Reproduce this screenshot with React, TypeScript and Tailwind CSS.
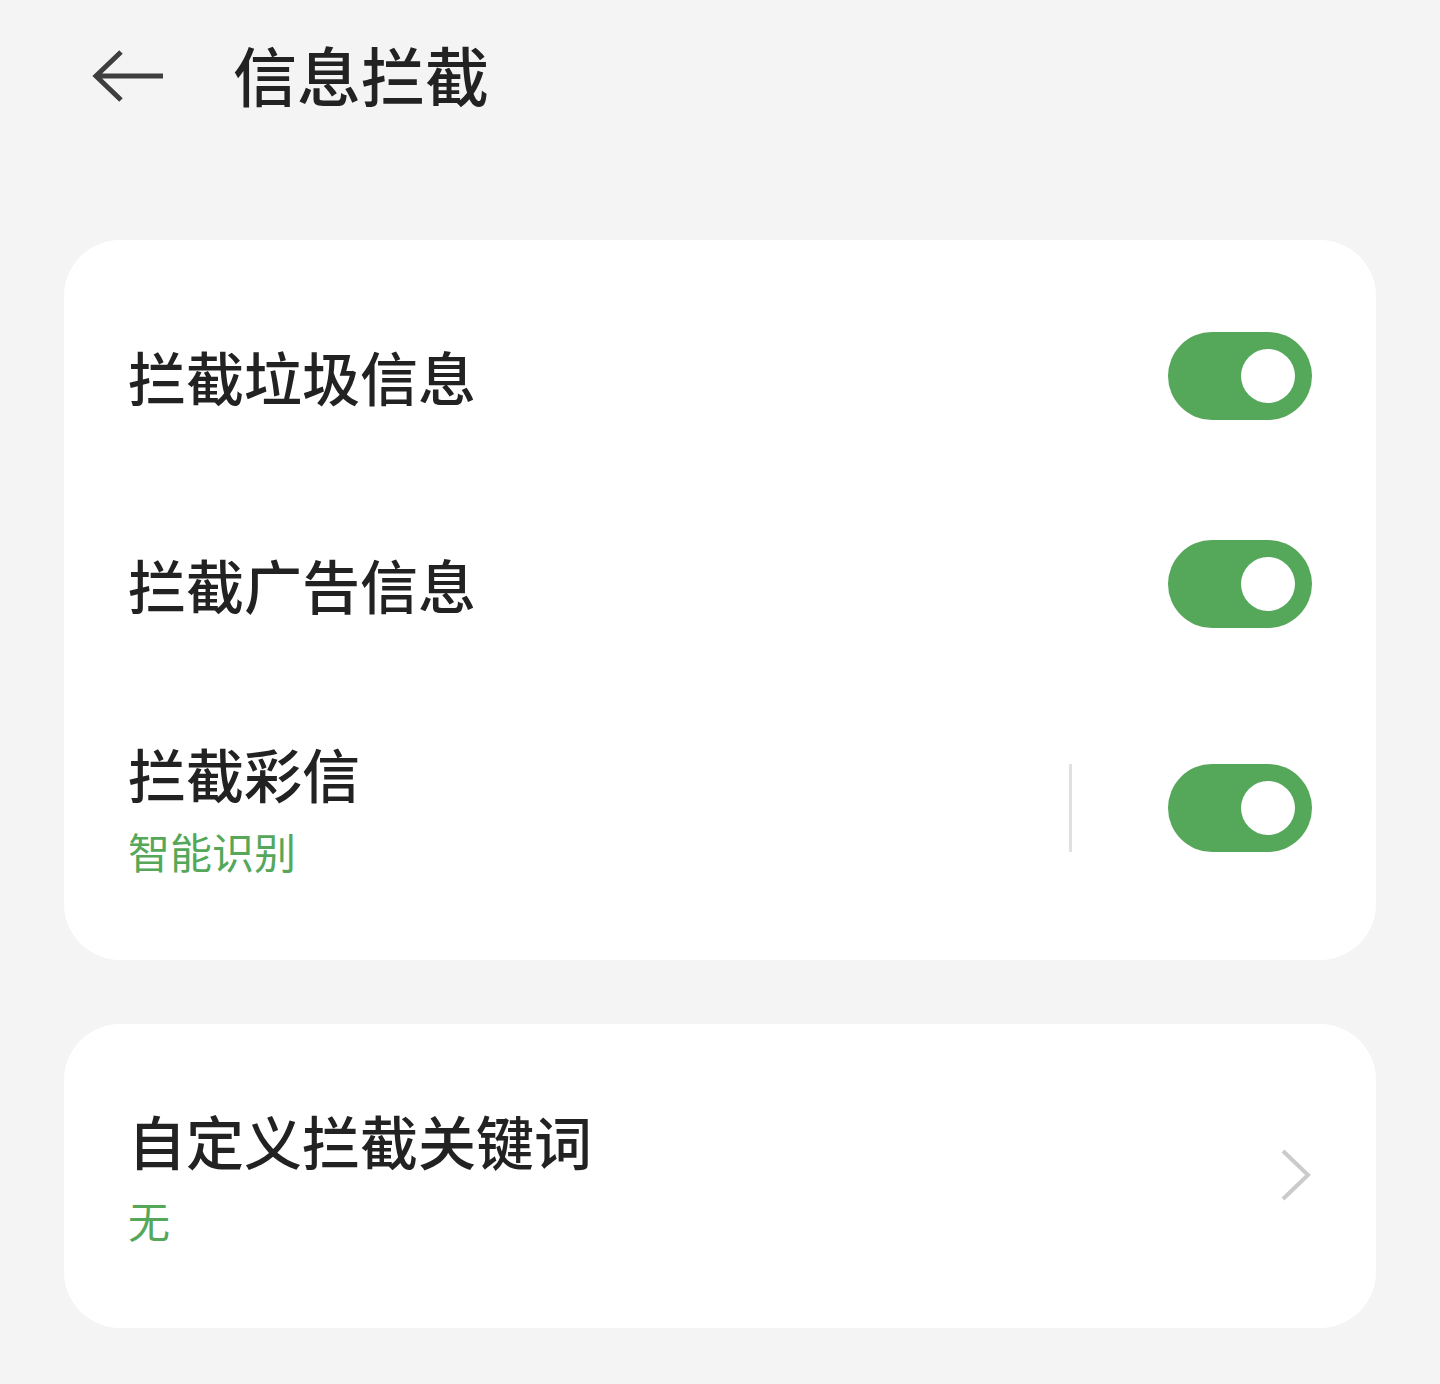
import React from "react";

const font = { fontFamily: '"Noto Sans CJK SC", "Noto Sans", sans-serif' };

function Toggle() {
  return (
    <div className="w-[144px] h-[88px] rounded-full bg-[#55a75a] flex items-center justify-end pr-[17px]">
      <div className="w-[54px] h-[54px] rounded-full bg-white" />
    </div>
  );
}

export default function App() {
  return (
    <div className="min-h-[1384px] w-full bg-[#f4f4f4] text-[#222222]" style={font}>
      <header className="h-[152px] flex items-center pl-[91px]">
        <svg width="74" height="60" viewBox="0 0 74 60" fill="none" className="shrink-0">
          <path d="M30 6 L5 30 L30 54 M5 30 L72 30" stroke="#3e3e3e" strokeWidth="5" strokeLinecap="butt" strokeLinejoin="miter" />
        </svg>
        <h1 className="ml-[68px] -mt-[6px] text-[64px] leading-[80px] font-medium text-[#222222]">信息拦截</h1>
      </header>

      <div className="mt-[88px] px-16 flex flex-col gap-16">
        <section className="bg-white rounded-[56px] px-16 py-8">
          <div className="h-[208px] flex items-center justify-between">
            <span className="text-[58px] leading-[72px] font-medium">拦截垃圾信息</span>
            <Toggle />
          </div>
          <div className="h-[208px] flex items-center justify-between">
            <span className="text-[58px] leading-[72px] font-medium">拦截广告信息</span>
            <Toggle />
          </div>
          <div className="h-[240px] flex items-center justify-between">
            <div className="flex flex-col pt-[4px]">
              <span className="text-[58px] leading-[64px] font-medium">拦截彩信</span>
              <span className="mt-[18px] text-[42px] leading-[56px] text-[#55a75a]">智能识别</span>
            </div>
            <div className="flex items-center">
              <div className="w-[3px] h-[88px] bg-[#e0e0e0] mr-[96px]" />
              <Toggle />
            </div>
          </div>
        </section>

        <section className="bg-white rounded-[56px] px-16 h-[304px] flex items-center justify-between">
          <div className="flex flex-col pt-[4px]">
            <span className="text-[58px] leading-[64px] font-medium">自定义拦截关键词</span>
            <span className="mt-[20px] text-[42px] leading-[56px] text-[#55a75a]">无</span>
          </div>
          <svg width="36" height="56" viewBox="0 0 36 56" fill="none" className="shrink-0 -mr-[2px]">
            <path d="M5 3 L30 27 L5 51" stroke="#cbcbcb" strokeWidth="4" strokeLinejoin="miter" />
          </svg>
        </section>
      </div>
    </div>
  );
}
